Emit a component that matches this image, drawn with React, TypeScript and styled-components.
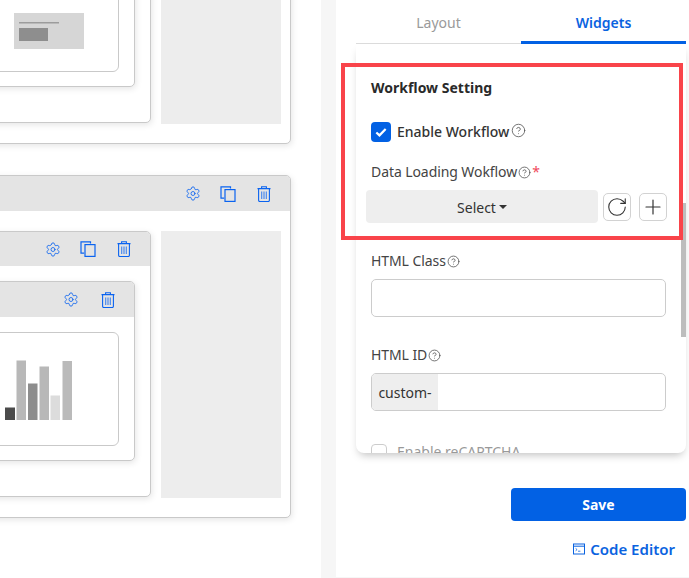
import React from "react";
import styled, { createGlobalStyle } from "styled-components";
import { CircleHelp, Plus, RotateCw, Settings } from "lucide-react";

const Global = createGlobalStyle`
  html, body { margin: 0; padding: 0; background: #fff; }
  #root { width: 689px; height: 578px; overflow: hidden; }
  * { box-sizing: border-box; }
`;

const BLUE = "#0261e4";

const Page = styled.div`
  display: flex;
  width: 689px;
  height: 578px;
  background: #f6f6f6;
  font-family: "Noto Sans", "Open Sans", sans-serif;
  font-size: 14px;
  color: #333;
`;

const Canvas = styled.div`
  width: 321px;
  height: 578px;
  flex: none;
  background: #fff;
  overflow: hidden;
  padding-right: 30px;
`;

const Stack = styled.div`
  display: flex;
  flex-direction: column;
  gap: 31px;
  margin: -199px 0 0 -200px;
`;

const Card = styled.div`
  background: #fff;
  border: 1px solid #c9c9c9;
  border-radius: 5px;
  box-shadow: 1px 2px 6px rgba(0, 0, 0, 0.1);
  overflow: hidden;
`;

const CardHeader = styled.div<{ $h: number }>`
  height: ${(p) => p.$h}px;
  background: #e4e4e4;
  display: flex;
  align-items: center;
  justify-content: flex-end;
  gap: 20px;
  padding-right: 18px;
  color: #0a63f0;
`;

const IconSlot = styled.span<{ $nudge?: number }>`
  display: flex;
  width: 16px;
  justify-content: center;
  margin-right: ${(p) => p.$nudge ?? 0}px;
`;

const OuterBody = styled.div`
  display: grid;
  grid-template-columns: 1fr 120px;
  column-gap: 10px;
  padding: 20px 9px 20px 0;
`;

const SideBlock = styled.div`
  background: #ededed;
  margin-bottom: -1px;
`;

const MidBody = styled.div`
  padding: 15px 15px 35px 0;
`;

const InnerBody = styled.div`
  padding: 15px 15px 14px 0;
`;

const PreviewBox = styled.div<{ $pr: number; $pb: number }>`
  height: 114px;
  border: 1px solid #c9c9c9;
  border-radius: 6px;
  background: #fff;
  display: flex;
  justify-content: flex-end;
  align-items: flex-end;
  padding: 0 ${(p) => p.$pr}px ${(p) => p.$pb}px 0;
`;

const Gutter = styled.div`
  width: 15px;
  flex: none;
`;

const Panel = styled.div`
  position: relative;
  width: 353px;
  height: 577px;
  flex: none;
  background: #fff;
  padding: 0 3px 0 20px;
  display: flex;
  flex-direction: column;
`;

const Tabs = styled.div`
  display: grid;
  grid-template-columns: 1fr 1fr;
  height: 44px;
  flex: none;
`;

const Tab = styled.div<{ $active?: boolean }>`
  display: flex;
  align-items: flex-start;
  justify-content: center;
  padding-top: 13px;
  line-height: 20px;
  color: ${(p) => (p.$active ? "#0a63e0" : "#9a9a9a")};
  font-weight: ${(p) => (p.$active ? 600 : 400)};
  border-bottom: ${(p) => (p.$active ? `3px solid ${BLUE}` : "1px solid #dcdcdc")};
`;

const Scroll = styled.div`
  position: relative;
  height: 409px;
  flex: none;
  overflow: hidden;
  padding: 34px 20px 0 15px;
  border-radius: 0 0 8px 8px;
  box-shadow: 0 5px 8px -3px rgba(0, 0, 0, 0.25);
  background: #fff;
`;

const Thumb = styled.div`
  position: absolute;
  right: 0;
  top: 159px;
  width: 5px;
  height: 134px;
  background: #bdbdbd;
`;

const Title = styled.div`
  font-weight: 700;
  line-height: 20px;
  color: #2a2a2a;
  margin-bottom: 24px;
`;

const CheckRow = styled.label<{ $muted?: boolean }>`
  display: flex;
  align-items: center;
  height: 20px;
  line-height: 20px;
  font-weight: ${(p) => (p.$muted ? 400 : 500)};
  color: ${(p) => (p.$muted ? "#999" : "#333")};
  margin-bottom: 20px;
`;

const CheckBox = styled.span`
  width: 20px;
  height: 20px;
  border-radius: 4px;
  background: ${BLUE};
  display: flex;
  align-items: center;
  justify-content: center;
  margin-right: 6px;
`;

const EmptyCheck = styled.span`
  width: 16px;
  height: 16px;
  border-radius: 4px;
  border: 1px solid #ccc;
  margin-right: 10px;
`;

const FieldLabel = styled.div`
  display: flex;
  align-items: center;
  line-height: 20px;
  letter-spacing: -0.08px;
  color: #444;
  margin-bottom: 8px;
`;

const Help = styled(CircleHelp)<{ $up?: boolean }>`
  margin-left: ${(p) => (p.$up ? 2 : 1)}px;
  color: #555;
  position: relative;
  top: ${(p) => (p.$up ? -2 : 0)}px;
`;

const Star = styled.span`
  color: #f0485a;
  margin-left: 1px;
`;

const SelectRow = styled.div`
  display: flex;
  align-items: center;
  margin: 0 -1px 28px -5px;
`;

const SelectButton = styled.div`
  width: 232px;
  height: 33px;
  border-radius: 4px;
  background: #eee;
  color: #333;
  display: flex;
  align-items: center;
  justify-content: center;
  gap: 3px;
  padding-top: 1px;
  margin-right: 5px;
`;

const Caret = styled.span`
  width: 0;
  height: 0;
  border-left: 4px solid transparent;
  border-right: 4px solid transparent;
  border-top: 4px solid #333;
`;

const IconButton = styled.div`
  width: 28px;
  height: 28px;
  border: 1px solid #d2d2d2;
  border-radius: 5px;
  display: flex;
  align-items: center;
  justify-content: center;
  color: #333;
  margin-right: 8px;
  &:last-child { margin-right: 0; }
`;

const TextInput = styled.div`
  height: 38px;
  border: 1px solid #ccc;
  border-radius: 5px;
  margin-bottom: 28px;
  display: flex;
  overflow: hidden;
`;

const Addon = styled.div`
  width: 66px;
  background: #eee;
  display: flex;
  align-items: center;
  justify-content: center;
  color: #333;
`;

const RecaptchaGap = styled.div`
  height: 3px;
`;

const SaveRow = styled.div`
  display: flex;
  justify-content: flex-end;
  margin-top: 35px;
`;

const SaveButton = styled.div`
  width: 175px;
  height: 33px;
  background: ${BLUE};
  border-radius: 4px;
  color: #fff;
  font-weight: 700;
  display: flex;
  align-items: center;
  justify-content: center;
`;

const CodeLink = styled.div`
  display: flex;
  align-items: center;
  justify-content: flex-end;
  gap: 5px;
  height: 20px;
  margin-top: 18px;
  padding-right: 11px;
  color: #0a63e0;
  font-size: 15px;
  font-weight: 600;
`;

const Annotation = styled.div`
  position: absolute;
  left: 5px;
  top: 63px;
  width: 342px;
  height: 177px;
  border: 4px solid #f9444a;
  pointer-events: none;
`;

const Gear = () => <Settings size={21} strokeWidth={1.25} />;

const Copy = () => (
  <svg width="16" height="16" viewBox="0 0 16 16" fill="none" stroke="currentColor" strokeWidth="1.2">
    <path d="M10.5 2.5V.8H1v11.4h3.2" />
    <rect x="5" y="3.6" width="10" height="11.8" />
  </svg>
);

const Trash = () => (
  <svg width="14" height="16" viewBox="0 0 14 16" fill="none" stroke="currentColor" strokeWidth="1.1">
    <path d="M.5 2.6h13M4.6 2.6V.7h4.8v1.9" />
    <path d="M1.6 2.6v11.6c0 .8.5 1.3 1.3 1.3h8.2c.8 0 1.3-.5 1.3-1.3V2.6" />
    <path d="M4.7 5.5v7.5M7 5.5v7.5M9.3 5.5v7.5" strokeOpacity=".75" />
  </svg>
);

const Illustration = () => (
  <svg width="70" height="36" viewBox="0 0 70 36">
    <rect width="70" height="36" fill="#d6d6d6" />
    <rect x="5" y="9" width="40" height="1.5" fill="#9c9c9c" />
    <rect x="5" y="15" width="29" height="13" fill="#8e8e8e" />
  </svg>
);

const bars = [
  { x: 0, w: 10, top: 47.5, fill: "#4b4b4b" },
  { x: 11.5, w: 9.5, top: 0.5, fill: "#b8b8b8" },
  { x: 23, w: 9.5, top: 23.5, fill: "#8d8d8d" },
  { x: 34.5, w: 9.5, top: 6.5, fill: "#b8b8b8" },
  { x: 45.5, w: 9.5, top: 35.5, fill: "#dcdcdc" },
  { x: 57.5, w: 9.5, top: 1, fill: "#bababa" },
];

const BarChart = () => (
  <svg width="67" height="60" viewBox="0 0 67 60">
    {bars.map((b) => (
      <rect key={b.x} x={b.x} y={b.top} width={b.w} height={60 - b.top} fill={b.fill} />
    ))}
  </svg>
);

const Terminal = () => (
  <svg width="12" height="12" viewBox="0 0 12 12" fill="none" stroke="currentColor" strokeWidth="1">
    <rect x=".5" y="1" width="11" height="10" />
    <path d="M.5 3.2h11" />
    <path d="M2.6 5.4l1.5 1.2-1.5 1.2M5 8.2h2.4" strokeWidth=".8" />
  </svg>
);

const Section: React.FC<{ preview: React.ReactNode; $pr: number; $pb: number }> = ({ preview, $pr, $pb }) => (
  <Card>
    <CardHeader $h={35}>
      <IconSlot $nudge={-1}><Gear /></IconSlot>
      <IconSlot><Copy /></IconSlot>
      <IconSlot><Trash /></IconSlot>
    </CardHeader>
    <OuterBody>
      <Card>
        <CardHeader $h={34}>
          <IconSlot $nudge={-1}><Gear /></IconSlot>
          <IconSlot><Copy /></IconSlot>
          <IconSlot><Trash /></IconSlot>
        </CardHeader>
        <MidBody>
          <Card>
            <CardHeader $h={35}>
              <IconSlot $nudge={1}><Gear /></IconSlot>
              <IconSlot><Trash /></IconSlot>
            </CardHeader>
            <InnerBody>
              <PreviewBox $pr={$pr} $pb={$pb}>{preview}</PreviewBox>
            </InnerBody>
          </Card>
        </MidBody>
      </Card>
      <SideBlock />
    </OuterBody>
  </Card>
);

export default function App() {
  return (
    <Page>
      <Global />
      <Canvas>
        <Stack>
          <Section preview={<Illustration />} $pr={34} $pb={22} />
          <Section preview={<BarChart />} $pr={46} $pb={25} />
        </Stack>
      </Canvas>
      <Gutter />
      <Panel>
        <Tabs>
          <Tab>Layout</Tab>
          <Tab $active>Widgets</Tab>
        </Tabs>
        <Scroll>
          <Title>Workflow Setting</Title>
          <CheckRow>
            <CheckBox>
              <svg width="14" height="14" viewBox="0 0 12 12" fill="none" stroke="#fff" strokeWidth="1.9">
                <path d="M2 6.4l2.7 2.5L10 3.4" />
              </svg>
            </CheckBox>
            Enable Workflow
            <Help size={15} strokeWidth={1.3} $up />
          </CheckRow>
          <FieldLabel>
            Data Loading Wokflow
            <Help size={13} strokeWidth={1.5} />
            <Star>*</Star>
          </FieldLabel>
          <SelectRow>
            <SelectButton>Select <Caret /></SelectButton>
            <IconButton><RotateCw size={22} strokeWidth={1.2} /></IconButton>
            <IconButton><Plus size={24} strokeWidth={1.2} /></IconButton>
          </SelectRow>
          <FieldLabel>
            HTML Class
            <Help size={13} strokeWidth={1.5} />
          </FieldLabel>
          <TextInput />
          <FieldLabel>
            HTML ID
            <Help size={13} strokeWidth={1.5} />
          </FieldLabel>
          <TextInput>
            <Addon>custom-</Addon>
          </TextInput>
          <RecaptchaGap />
          <CheckRow $muted>
            <EmptyCheck />
            Enable reCAPTCHA
          </CheckRow>
          <Thumb />
        </Scroll>
        <SaveRow>
          <SaveButton>Save</SaveButton>
        </SaveRow>
        <CodeLink>
          <Terminal />
          Code Editor
        </CodeLink>
        <Annotation />
      </Panel>
    </Page>
  );
}
